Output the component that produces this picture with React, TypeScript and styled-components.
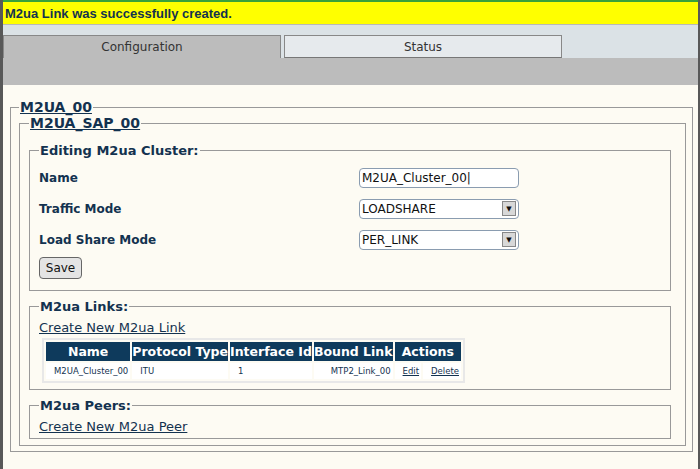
import React from "react";
import styled, { createGlobalStyle } from "styled-components";

const Global = createGlobalStyle`
  html, body { margin: 0; padding: 0; background: #585858; }
  body { font-family: "DejaVu Sans", sans-serif; }
`;

const Frame = styled.div`
  width: 695px; height: 467px; margin-left: 3px; border-top: 2px solid #3aa13a;
  background: #fdfbf3; display: flex; flex-direction: column; overflow: hidden;
`;
const Banner = styled.div`
  background: #ffff00; height: 22px; display: flex; align-items: center;
  padding-left: 2px; font: bold 13px "Liberation Sans", Arial, sans-serif; color: #13324f;
  border-bottom: 1px solid #b8b8b8;
`;
const TabBand = styled.div` background: #dbe2e6; height: 10px; `;
const Tabs = styled.div` display: flex; background: #dbe2e6; height: 23px; align-items: flex-end; `;
const Tab = styled.div<{ $active?: boolean }>`
  width: 278px; height: 23px; box-sizing: border-box;
  display: flex; align-items: center; justify-content: center;
  font: 12px "DejaVu Sans", sans-serif; color: #333;
  background: ${p => (p.$active ? "#bcbcbc" : "#e6eaed")};
  border: 1px solid #888; border-bottom: ${p => (p.$active ? "none" : "1px solid #777")};
  margin-left: ${p => (p.$active ? "0" : "3px")};
`;
const GrayBand = styled.div` background: #bcbcbc; height: 27px; `;
const Content = styled.div` padding: 14px 5px 0 7px; `;
const FS = styled.fieldset<{ $pad?: string }>`
  margin: 0; border: 1px solid #999; padding: ${p => p.$pad || "0 6px 6px 8px"};
  display: flex; flex-direction: column;
`;
const Legend = styled.legend`
  padding: 0 1px; font: bold 14px "DejaVu Sans", sans-serif; color: #13324f;
  text-decoration: underline;
`;
const SubLegend = styled.legend`
  padding: 0 1px; font: bold 13px "DejaVu Sans", sans-serif; color: #13324f;
`;
const Row = styled.div`
  display: grid; grid-template-columns: 320px 160px; align-items: center; height: 31px;
  font: bold 12px "DejaVu Sans", sans-serif; color: #13324f;
`;
const Input = styled.div`
  width: 160px; height: 20px; box-sizing: border-box; border: 1px solid #8a9cb0; border-radius: 4px;
  background: #fff; font: 12px "DejaVu Sans", sans-serif; color: #111; display: flex; align-items: center;
  padding-left: 2px; justify-content: space-between; font-weight: normal;
`;
const Arrow = styled.span`
  width: 14px; height: 15px; margin-right: 2px; background: #d8d8d8; border: 1px solid #888;
  box-sizing: border-box; display: flex; align-items: center; justify-content: center; font-size: 7px;
`;
const Btn = styled.button`
  width: 43px; height: 22px; border: 1px solid #666; border-radius: 4px; background: #e4e4e4;
  font: 12px "DejaVu Sans", sans-serif; color: #111; margin: 2px 0 5px 0; padding: 0;
`;
const A = styled.a`
  font: 13px "DejaVu Sans", sans-serif; color: #13324f; text-decoration: underline; margin: 6px 0 0;
`;
const Table = styled.table`
  border: 2px solid #e8e8e8; border-spacing: 2px; margin: 3px 0 0 3px; font-family: "DejaVu Sans", sans-serif;
  width: 416px;
`;
const Th = styled.th`
  background: #0e3a5c; color: #fff; font-size: 12.5px; height: 19px; padding: 0; white-space: nowrap;
`;
const Td = styled.td<{ $align?: string }>`
  background: #fff; font-size: 8.5px; color: #13324f; height: 16px; padding: 0 2px 0 8px;
  text-align: ${p => p.$align || "left"};
  a { color: #13324f; }
`;
const Gap = styled.div<{ $h: number }>` height: ${p => p.$h}px; `;

export default function App() {
  return (
    <>
      <Global />
      <Frame>
        <Banner>M2ua Link was successfully created.</Banner>
        <TabBand />
        <Tabs>
          <Tab $active>Configuration</Tab>
          <Tab>Status</Tab>
        </Tabs>
        <GrayBand />
        <Content>
          <FS $pad="0 6px 5px 8px">
            <Legend>M2UA_00</Legend>
            <FS $pad="12px 14px 6px 9px">
              <Legend>M2UA_SAP_00</Legend>
              <FS $pad="4px 6px 6px 9px">
                <SubLegend>Editing M2ua Cluster:</SubLegend>
                <Row>Name<Input>M2UA_Cluster_00|</Input></Row>
                <Row>Traffic Mode<Input>LOADSHARE<Arrow>▼</Arrow></Input></Row>
                <Row>Load Share Mode<Input>PER_LINK<Arrow>▼</Arrow></Input></Row>
                <div><Btn>Save</Btn></div>
              </FS>
              <Gap $h={8} />
              <FS $pad="0 6px 6px 9px">
                <SubLegend>M2ua Links:</SubLegend>
                <A href="#">Create New M2ua Link</A>
                <Table>
                  <thead>
                    <tr><Th>Name</Th><Th>Protocol Type</Th><Th>Interface Id</Th><Th>Bound Link</Th><Th colSpan={2}>Actions</Th></tr>
                  </thead>
                  <tbody>
                    <tr>
                      <Td $align="right">M2UA_Cluster_00</Td><Td>ITU</Td><Td>1</Td>
                      <Td $align="right">MTP2_Link_00</Td>
                      <Td><a href="#">Edit</a></Td><Td $align="right"><a href="#">Delete</a></Td>
                    </tr>
                  </tbody>
                </Table>
              </FS>
              <Gap $h={8} />
              <FS $pad="0 6px 4px 9px">
                <SubLegend>M2ua Peers:</SubLegend>
                <A href="#">Create New M2ua Peer</A>
              </FS>
            </FS>
          </FS>
        </Content>
      </Frame>
    </>
  );
}
